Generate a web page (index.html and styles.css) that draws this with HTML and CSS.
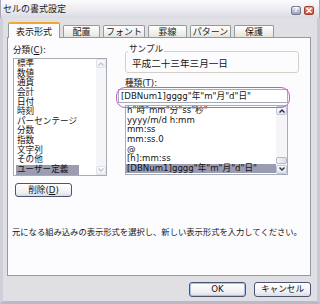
FILE: index.html
```html
<!DOCTYPE html>
<html lang="ja">
<head>
  <meta charset="UTF-8">
  <title>セルの書式設定</title>
  <link rel="stylesheet" href="styles.css">
</head>
<body>
  <div class="window">
    <div class="titlebar">
      <span class="title">セルの書式設定</span>
      <div class="caption-buttons">
        <span class="cap-btn help">?</span>
        <span class="cap-btn close">
          <svg width="8" height="7" viewBox="0 0 8 7"><path d="M2 1.5 L6 5.5 M6 1.5 L2 5.5" stroke="#fff" stroke-width="1.5" stroke-linecap="round"/></svg>
        </span>
      </div>
    </div>

    <div class="frame">
      <div class="tabs">
        <div class="tab active w-hyouji">表示形式</div>
        <div class="tab w-haichi">配置</div>
        <div class="tab w-font">フォント</div>
        <div class="tab w-keisen">罫線</div>
        <div class="tab w-pattern">パターン</div>
        <div class="tab w-hogo">保護</div>
      </div>

      <div class="panel">
        <div class="panel-main">
          <div class="col-left">
            <div class="label">分類(<u>C</u>):</div>
            <div class="listbox category">
              <ul class="items">
                <li>標準</li>
                <li>数値</li>
                <li>通貨</li>
                <li>会計</li>
                <li>日付</li>
                <li>時刻</li>
                <li>パーセンテージ</li>
                <li>分数</li>
                <li>指数</li>
                <li>文字列</li>
                <li>その他</li>
                <li><span class="selected">ユーザー定義</span></li>
              </ul>
              <div class="scrollbar disabled">
                <span class="sb-btn">
                  <svg width="8" height="6" viewBox="0 0 8 6"><polyline points="1.5,4.5 4,2 6.5,4.5" fill="none" stroke="#c4c8d4" stroke-width="1.4"/></svg>
                </span>
                <span class="sb-track"></span>
                <span class="sb-btn">
                  <svg width="8" height="6" viewBox="0 0 8 6"><polyline points="1.5,1.5 4,4 6.5,1.5" fill="none" stroke="#c4c8d4" stroke-width="1.4"/></svg>
                </span>
              </div>
            </div>
            <button class="btn delete">削除(<u>D</u>)</button>
          </div>

          <div class="col-right">
            <fieldset class="sample">
              <legend>サンプル</legend>
              <div class="sample-text">平成二十三年三月一日</div>
            </fieldset>
            <div class="label type-label">種類(<u>T</u>):</div>
            <div class="type-field">[DBNum1]gggg"年"m"月"d"日"</div>
            <div class="listbox formats">
              <ul class="items">
                <li>h"時"mm"分"ss"秒"</li>
                <li>yyyy/m/d h:mm</li>
                <li>mm:ss</li>
                <li>mm:ss.0</li>
                <li>@</li>
                <li>[h]:mm:ss</li>
                <li class="selected-row">[DBNum1]gggg"年"m"月"d"日"</li>
              </ul>
              <div class="scrollbar">
                <span class="sb-btn">
                  <svg width="8" height="6" viewBox="0 0 8 6"><polyline points="1.5,4.5 4,2 6.5,4.5" fill="none" stroke="#2c3450" stroke-width="1.5"/></svg>
                </span>
                <span class="sb-track"><span class="sb-thumb"></span></span>
                <span class="sb-btn">
                  <svg width="8" height="6" viewBox="0 0 8 6"><polyline points="1.5,1.5 4,4 6.5,1.5" fill="none" stroke="#2c3450" stroke-width="1.5"/></svg>
                </span>
              </div>
            </div>
          </div>
        </div>

        <p class="desc">元になる組み込みの表示形式を選択し、新しい表示形式を入力してください。</p>
      </div>

      <div class="footer">
        <button class="btn default">OK</button>
        <button class="btn">キャンセル</button>
      </div>
    </div>
  </div>
</body>
</html>
```

FILE: styles.css
```css
* {
  box-sizing: border-box;
}

body {
  margin: 0;
  font-family: "DejaVu Sans", "Noto Sans CJK JP", sans-serif;
  font-size: 8.6px;
  color: #141414;
  background-color: #e0dfe3;
}

.window {
  width: 320px;
  height: 304px;
  display: flex;
  flex-direction: column;
  background-color: #e0dfe3;
}

/* title bar */

.titlebar {
  height: 18px;
  display: flex;
  justify-content: space-between;
  align-items: flex-start;
  padding: 0 5px 0 2px;
  background: linear-gradient(#fbfbfd, #ececf1 55%, #dadae3);
  border-left: 1px solid #a9a9b8;
  border-right: 1px solid #a9a9b8;
}

.title {
  font-family: "Noto Sans CJK JP", sans-serif;
  font-size: 9px;
  line-height: 11px;
  margin-top: 3px;
  color: #1c1c24;
}

.caption-buttons {
  display: flex;
  gap: 3px;
  margin-top: 6px;
}

.cap-btn {
  width: 10px;
  height: 9px;
  border-radius: 2px;
  display: flex;
  align-items: center;
  justify-content: center;
}

.help {
  background: linear-gradient(#e6e8f0, #9aa0b6);
  border: 1px solid #727890;
  color: #fff;
  font-family: "DejaVu Sans", sans-serif;
  font-size: 7px;
  font-weight: bold;
  line-height: 7px;
}

.close {
  background: linear-gradient(#ee9c88, #cc4a33);
  border: 1px solid #a33c2c;
}

/* dialog body */

.frame {
  flex: 1;
  display: flex;
  flex-direction: column;
  padding: 0 6px 0 4px;
  border: 3px solid #c9c9d5;
  border-top: none;
  border-left-color: #cfcfda;
  border-bottom-color: #b9b9c8;
}

.tabs {
  position: relative;
  height: 20px;
  display: flex;
  align-items: flex-end;
  gap: 3px;
  padding-left: 1px;
  margin-bottom: -1px;
}

.tab {
  height: 12px;
  margin-bottom: 1px;
  border: 1px solid #919b9c;
  border-bottom: none;
  border-radius: 2px 2px 0 0;
  background: linear-gradient(#ffffff, #f1f0ec 60%, #e4e3dc);
  font-family: "Noto Sans CJK JP", sans-serif;
  font-size: 9px;
  line-height: 11px;
  text-align: center;
  color: #1a1a1a;
}

.tab.active {
  height: 16px;
  margin-bottom: 0;
  padding-top: 2px;
  border-top: 2px solid #f2a735;
  background: #fcfcfe;
}

.w-hyouji { width: 52px; }
.w-haichi { width: 37px; }
.w-font { width: 42px; }
.w-keisen { width: 39px; }
.w-pattern { width: 41px; }
.w-hogo { width: 40px; }

.panel {
  height: 239px;
  border: 1px solid #919b9c;
  background-color: #fcfcfe;
}

.panel-main {
  display: flex;
  gap: 18px;
  padding: 6px 0 0 5px;
}

.label {
  line-height: 13px;
}

.col-left {
  width: 94px;
}

.col-right {
  width: 174px;
}

/* list boxes */

.listbox {
  display: flex;
  background-color: #fff;
  border: 1px solid #a5acb5;
}

.items {
  flex: 1;
  list-style: none;
  margin: 0;
  padding: 0;
  overflow: hidden;
}

.items li {
  height: 9.65px;
  line-height: 9.65px;
  white-space: nowrap;
}

.category {
  margin-top: 1px;
  height: 117.8px;
}

.category .items li {
  padding-left: 3px;
}

.category .selected {
  display: inline-block;
  width: 63px;
  margin-left: -1px;
  padding-left: 1px;
  background-color: #9b9bb2;
}

.formats {
  margin-top: 2px;
  width: 163px;
  height: 69.6px;
}

.formats .items li {
  padding-left: 1px;
}

.formats .selected-row {
  background-color: #9b9bb2;
}

.scrollbar {
  width: 11px;
  display: flex;
  flex-direction: column;
  background-color: #f5f5f7;
}

.category .scrollbar {
  width: 10px;
}

.sb-btn {
  height: 9px;
  display: flex;
  align-items: center;
  justify-content: center;
  border: 1px solid #c3c6d6;
  border-radius: 2px;
  background: linear-gradient(#fafbfd, #dfe2ec);
}

.scrollbar.disabled .sb-btn {
  border-color: #e0e2ea;
  background: linear-gradient(#fdfdfe, #eff0f4);
}

.sb-track {
  flex: 1;
  display: flex;
  flex-direction: column;
  justify-content: flex-end;
  padding-bottom: 1px;
}

.sb-thumb {
  height: 7px;
  border: 1px solid #b4b8ca;
  border-radius: 2px;
  background: linear-gradient(90deg, #f4f5f9, #dcdfe9);
}

/* sample group box */

.sample {
  width: 174px;
  margin: 0;
  padding: 0 6px 4px;
  border: 1px solid #d4d0c8;
  border-radius: 3px;
}

.sample legend {
  margin-left: -4px;
  padding: 0 1px 4px;
  line-height: 10px;
  color: #1a1a1a;
}

.sample-text {
  font-family: "Noto Sans CJK JP", sans-serif;
  font-size: 9.6px;
  line-height: 10px;
}

.type-label {
  margin-top: 4px;
  line-height: 12px;
}

.type-field {
  position: relative;
  width: 170px;
  height: 14px;
  margin-left: -7px;
  padding-left: 2px;
  line-height: 12px;
  background-color: #fff;
  border: 1px solid #a5acb5;
  white-space: nowrap;
}

/* hand drawn highlight round the input */
.type-field::after {
  content: "";
  position: absolute;
  left: -3px;
  top: -3px;
  right: -3px;
  bottom: -6px;
  border: 1.5px solid #c65cc8;
  border-radius: 9px;
}

/* buttons */

.btn {
  width: 57px;
  height: 15px;
  padding: 0;
  font-family: "DejaVu Sans", "Noto Sans CJK JP", sans-serif;
  font-size: 8.6px;
  line-height: 13px;
  color: #141414;
  border: 1px solid #4a5470;
  border-radius: 3px;
  background: linear-gradient(#ffffff, #f0f0f3 70%, #d9dae2);
}

.btn.default {
  box-shadow: inset 0 0 0 1px #a9c1ea;
}

.delete {
  margin: 7px 0 0 2px;
  height: 14px;
}

.desc {
  margin: 29px 0 0 4px;
  font-size: 8.3px;
  line-height: 12px;
  white-space: nowrap;
}

.footer {
  display: flex;
  justify-content: flex-end;
  gap: 8px;
  margin-top: 6px;
}
```
